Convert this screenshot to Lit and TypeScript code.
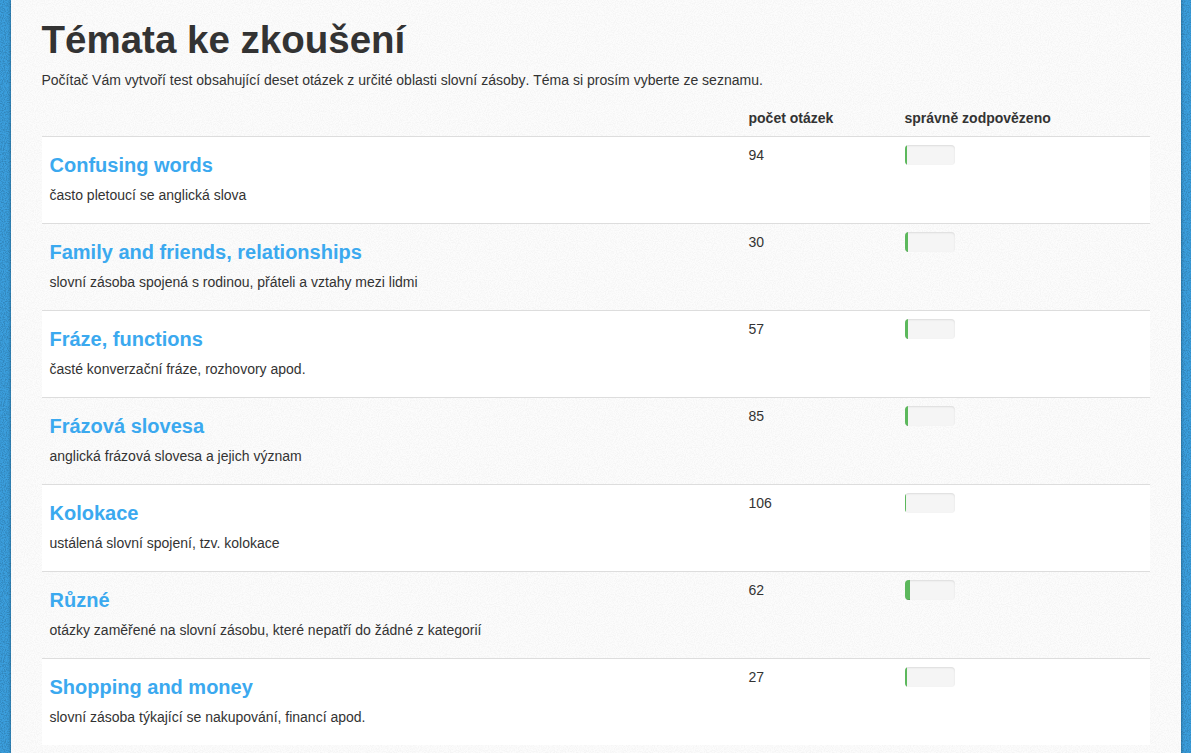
import { LitElement, html, css, unsafeCSS } from "lit";
import { customElement } from "lit/decorators.js";

const noise = (freq: number, alpha: number) =>
  `url("data:image/svg+xml,%3Csvg xmlns='http://www.w3.org/2000/svg' width='256' height='256'%3E%3Cfilter id='n' x='0' y='0' width='100%25' height='100%25'%3E%3CfeTurbulence type='fractalNoise' baseFrequency='${freq}' numOctaves='2' stitchTiles='stitch'/%3E%3CfeColorMatrix values='0 0 0 0 0 0 0 0 0 0 0 0 0 0 0 3 0 0 0 -1.2'/%3E%3C/filter%3E%3Crect width='256' height='256' filter='url(%23n)' opacity='${alpha}'/%3E%3C/svg%3E")`;

const rows = [
  { t: "Confusing words", d: "často pletoucí se anglická slova", n: 94, p: 4 },
  { t: "Family and friends, relationships", d: "slovní zásoba spojená s rodinou, přáteli a vztahy mezi lidmi", n: 30, p: 6 },
  { t: "Fráze, functions", d: "časté konverzační fráze, rozhovory apod.", n: 57, p: 6 },
  { t: "Frázová slovesa", d: "anglická frázová slovesa a jejich význam", n: 85, p: 6 },
  { t: "Kolokace", d: "ustálená slovní spojení, tzv. kolokace", n: 106, p: 2 },
  { t: "Různé", d: "otázky zaměřené na slovní zásobu, které nepatří do žádné z kategorií", n: 62, p: 10 },
  { t: "Shopping and money", d: "slovní zásoba týkající se nakupování, financí apod.", n: 27, p: 4 },
];

@customElement("app-root")
export class AppRoot extends LitElement {
  static styles = css`
    :host {
      display: block;
      height: 753px;
      overflow: hidden;
      background-color: #3b9fde;
      background-image: ${unsafeCSS(noise(0.9, 0.16))};
      font-family: "Liberation Sans", Arial, sans-serif;
      font-size: 14px;
      line-height: 20px;
      color: #333;
    }
    .page {
      width: 1170px;
      height: 753px;
      margin: 0 auto;
      box-sizing: border-box;
      padding: 0 31px;
      background-color: #fcfcfc;
      background-image: ${unsafeCSS(noise(0.9, 0.028))};
      overflow: hidden;
      box-shadow: 0 0 3px rgba(0, 0, 0, 0.45);
    }
    h1 {
      margin: 19px 0 9px;
      font-size: 38.5px;
      line-height: 42px;
      font-weight: 700;
      color: #333;
    }
    .intro {
      margin: 0 0 10px;
      font-kerning: none;
    }
    .table {
      display: grid;
      grid-template-columns: 699px 156px 1fr;
    }
    .head,
    .row {
      display: grid;
      grid-template-columns: subgrid;
      grid-column: 1 / -1;
    }
    .head > div {
      padding: 8px;
      font-weight: 700;
    }
    .row {
      height: 87px;
      box-sizing: border-box;
      border-top: 1px solid #ddd;
    }
    .row.odd { background: #fff; }
    .cell { padding: 8px; }
    h3 {
      margin: 9px 0;
      font-size: 20px;
      line-height: 22px;
      font-weight: 700;
      color: #3ba9ef;
    }
    .desc { margin: 0; }
    .progress {
      width: 50px;
      height: 20px;
      border-radius: 4px;
      overflow: hidden;
      background: #f5f5f5;
      box-shadow: inset 0 1px 2px rgba(0, 0, 0, 0.1);
    }
    .bar {
      height: 100%;
      background: #5cb85c;
      box-shadow: inset 0 -1px 0 rgba(0, 0, 0, 0.15);
    }
  `;

  render() {
    return html`
      <div class="page">
        <h1>Témata ke zkoušení</h1>
        <p class="intro">Počítač Vám vytvoří test obsahující deset otázek z určité oblasti slovní zásoby. Téma si prosím vyberte ze seznamu.</p>
        <div class="table">
          <div class="head"><div></div><div>počet otázek</div><div>správně zodpovězeno</div></div>
          ${rows.map(
            (r, i) => html`
              <div class="row ${i % 2 === 0 ? "odd" : ""}">
                <div class="cell"><h3>${r.t}</h3><p class="desc">${r.d}</p></div>
                <div class="cell">${r.n}</div>
                <div class="cell"><div class="progress"><div class="bar" style="width:${r.p}%"></div></div></div>
              </div>
            `
          )}
        </div>
      </div>
    `;
  }
}
